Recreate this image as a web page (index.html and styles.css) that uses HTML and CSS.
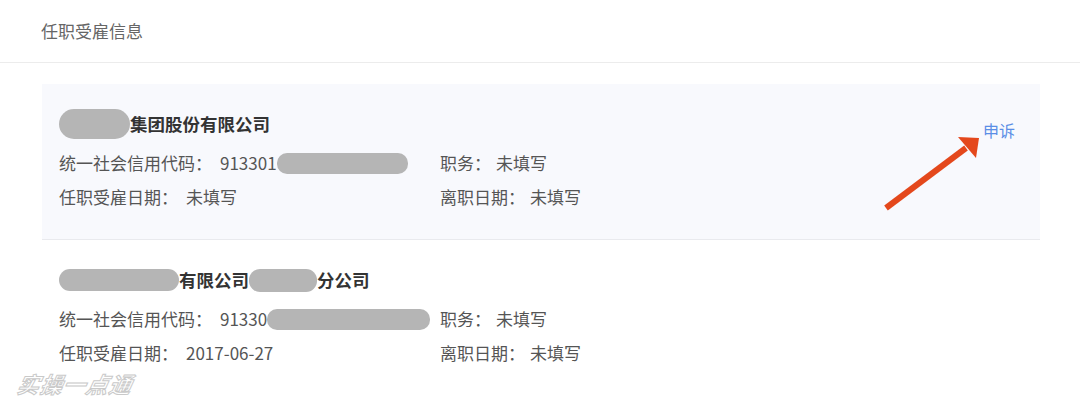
FILE: index.html
```html
<!DOCTYPE html>
<html lang="zh-CN">
<head>
<meta charset="utf-8">
<title>任职受雇信息</title>
<link rel="stylesheet" href="styles.css">
</head>
<body>
<div class="page">
  <div class="header">任职受雇信息</div>
  <div class="list">
    <div class="card card-active">
      <div class="info">
        <div class="title"><span class="blur blur-t1"></span>集团股份有限公司</div>
        <div class="grid">
          <div class="cell"><span class="label">统一社会信用代码：</span><span class="value">913301</span><span class="blur blur-r1"></span></div>
          <div class="cell"><span class="label">职务：</span><span class="value">未填写</span></div>
          <div class="cell"><span class="label">任职受雇日期：</span><span class="value">未填写</span></div>
          <div class="cell"><span class="label">离职日期：</span><span class="value">未填写</span></div>
        </div>
      </div>
      <a class="action">申诉</a>
    </div>
    <div class="card">
      <div class="info">
        <div class="title"><span class="blur blur-t2"></span>有限公司<span class="blur blur-t3"></span>分公司</div>
        <div class="grid">
          <div class="cell"><span class="label">统一社会信用代码：</span><span class="value">91330</span><span class="blur blur-r2"></span></div>
          <div class="cell"><span class="label">职务：</span><span class="value">未填写</span></div>
          <div class="cell"><span class="label">任职受雇日期：</span><span class="value">2017-06-27</span></div>
          <div class="cell"><span class="label">离职日期：</span><span class="value">未填写</span></div>
        </div>
      </div>
    </div>
  </div>
  <svg class="arrow" width="1080" height="408" viewBox="0 0 1080 408">
    <line x1="886" y1="208" x2="966" y2="148" stroke="#e4481c" stroke-width="6"/>
    <polygon points="979,138 958,137 976,158" fill="#e4481c"/>
  </svg>
  <div class="watermark">实操一点通</div>
</div>
</body>
</html>
```
FILE: styles.css
```css
html, body {
  margin: 0;
  padding: 0;
  background: #ffffff;
}
.page {
  position: relative;
  width: 1080px;
  height: 408px;
  overflow: hidden;
  font-family: "Microsoft YaHei", "Noto Sans CJK SC", "Noto Sans", sans-serif;
  color: #555;
}
.header {
  height: 62px;
  line-height: 62px;
  padding-left: 41px;
  font-size: 17px;
  color: #666;
  border-bottom: 1px solid #ececec;
}
.list {
  padding: 21px 40px 0 42px;
}
.card {
  display: flex;
  align-items: flex-start;
  padding: 28px 25px 31px 17px;
  border-bottom: 1px solid #e9eaee;
}
.card:last-child {
  border-bottom: none;
}
.card-active {
  background: #f8f9fd;
}
.info {
  flex: 1;
}
.title {
  height: 24px;
  line-height: 24px;
  font-size: 17.5px;
  font-weight: bold;
  color: #333;
  display: flex;
  align-items: center;
}
.grid {
  display: grid;
  grid-template-columns: 381px auto;
  row-gap: 12px;
  margin-top: 16px;
}
.cell {
  height: 22px;
  line-height: 22px;
  font-size: 17px;
  color: #555;
  display: flex;
  align-items: center;
  white-space: nowrap;
}
.cell:nth-child(odd) .value {
  margin-left: 8px;
}
.cell:nth-child(even) .value {
  margin-left: 5px;
}
.blur {
  display: inline-block;
  background: #b5b5b5;
}
.blur-t1 { width: 71px; height: 30px; border-radius: 15px; }
.blur-t2 { width: 120px; height: 22px; border-radius: 11px; }
.blur-t3 { width: 68px; height: 23px; border-radius: 11px; }
.blur-r1 { width: 131px; height: 21px; border-radius: 10px; }
.blur-r2 { width: 163px; height: 21px; border-radius: 10px; }
.action {
  margin-top: 7px;
  font-size: 16px;
  line-height: 22px;
  color: #5b8ee6;
  cursor: pointer;
}
.arrow {
  position: absolute;
  left: 0;
  top: 0;
  pointer-events: none;
}
.watermark {
  position: absolute;
  left: 18px;
  top: 367px;
  font-size: 22px;
  font-style: italic;
  font-weight: bold;
  color: #ffffff;
  -webkit-text-stroke: 1px #c9c9c9;
  letter-spacing: 1px;
  transform: skewX(-12deg);
}
```
